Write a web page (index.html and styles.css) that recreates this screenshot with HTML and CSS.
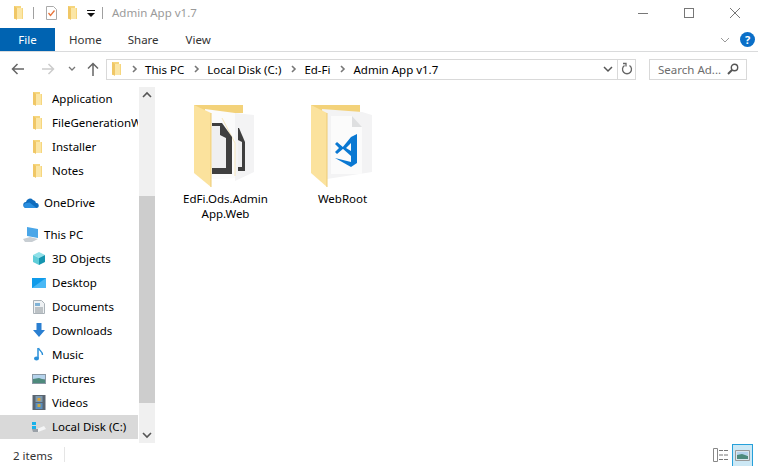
FILE: index.html
```html
<!DOCTYPE html>
<html lang="en">
<head>
  <meta charset="UTF-8">
  <title>Admin App v1.7</title>
  <link rel="stylesheet" href="styles.css">
</head>
<body>
  <svg class="defs" width="0" height="0">
    <symbol id="small-folder" viewBox="0 0 12 14">
      <path d="M1 0h7v2h2v11H1z" fill="#f6d67e"/>
      <path d="M1 0l3 2v12l-3-2z" fill="#f0c766"/>
      <path d="M4 2h5v11H4z" fill="#fbe6a6"/>
    </symbol>
    <symbol id="chev" viewBox="0 0 8 8">
      <path d="M2 1l3 3-3 3" fill="none" stroke="#777" stroke-width="1.6"/>
    </symbol>
  </svg>

  <!-- title bar -->
  <div class="titlebar">
    <svg class="qa-folder" width="12" height="14"><use href="#small-folder"/></svg>
    <span class="qa-sep"></span>
    <svg class="qa-check" width="13" height="14" viewBox="0 0 13 14">
      <path d="M1.500.5h7l3 3v10h-10z" fill="#fff" stroke="#aaa"/>
      <path d="M3.500 7l2 2.500 4-5" fill="none" stroke="#e8743b" stroke-width="1.300"/>
    </svg>
    <svg class="qa-folder2" width="12" height="14"><use href="#small-folder"/></svg>
    <svg class="qa-down" width="8" height="8" viewBox="0 0 8 8">
      <path d="M0 0h8v1H0zM0 3h8L4 7z" fill="#111"/>
    </svg>
    <span class="qa-sep"></span>
    <span class="title">Admin App v1.7</span>
    <div class="win-controls">
      <svg width="12" height="12" viewBox="0 0 12 12"><path d="M1 6.500h10" stroke="#777"/></svg>
      <svg width="12" height="12" viewBox="0 0 12 12"><rect x="1.500" y="1.500" width="9" height="9" fill="none" stroke="#777"/></svg>
      <svg width="12" height="12" viewBox="0 0 12 12"><path d="M1 1l10 10M11 1L1 11" stroke="#777"/></svg>
    </div>
  </div>

  <!-- ribbon tabs -->
  <div class="tabs">
    <div class="tab-file">File</div>
    <div class="tab tab-home">Home</div>
    <div class="tab tab-share">Share</div>
    <div class="tab tab-view">View</div>
    <svg class="ribbon-toggle" width="10" height="6" viewBox="0 0 10 6"><path d="M1 1l4 4 4-4" fill="none" stroke="#999"/></svg>
    <div class="help">?</div>
  </div>

  <!-- navigation row -->
  <div class="navbar">
    <svg class="nav-back" width="14" height="12" viewBox="0 0 14 12"><path d="M13 6H2M6.500 1L1.500 6l5 5" fill="none" stroke="#666" stroke-width="1.500"/></svg>
    <svg class="nav-forward" width="14" height="12" viewBox="0 0 14 12"><path d="M1 6h11M7.500 1l5 5-5 5" fill="none" stroke="#ccc" stroke-width="1.500"/></svg>
    <svg class="nav-recent" width="8" height="6" viewBox="0 0 8 6"><path d="M1 1l3 3 3-3" fill="none" stroke="#777" stroke-width="1.300"/></svg>
    <svg class="nav-up" width="12" height="14" viewBox="0 0 12 14"><path d="M6 14V2M1 6.500l5-5 5 5" fill="none" stroke="#666" stroke-width="1.500"/></svg>
    <div class="address">
      <svg class="addr-folder" width="12" height="14"><use href="#small-folder"/></svg>
      <svg class="crumb-chev" width="8" height="8"><use href="#chev"/></svg>
      <span class="crumb">This PC</span>
      <svg class="crumb-chev" width="8" height="8"><use href="#chev"/></svg>
      <span class="crumb">Local Disk (C:)</span>
      <svg class="crumb-chev" width="8" height="8"><use href="#chev"/></svg>
      <span class="crumb">Ed-Fi</span>
      <svg class="crumb-chev" width="8" height="8"><use href="#chev"/></svg>
      <span class="crumb">Admin App v1.7</span>
      <svg class="addr-drop" width="10" height="7" viewBox="0 0 10 7"><path d="M1 1l4 4 4-4" fill="none" stroke="#555" stroke-width="1.500"/></svg>
      <div class="addr-refresh">
        <svg width="12" height="14" viewBox="0 0 12 14"><path d="M3.500 3.500a4.500 4.500 0 1 0 5 0M2 1.500h3v3" fill="none" stroke="#666" stroke-width="1.300"/></svg>
      </div>
    </div>
    <div class="search">
      <span>Search Ad...</span>
      <svg width="12" height="12" viewBox="0 0 12 12"><circle cx="7.500" cy="4.500" r="3.200" fill="none" stroke="#555" stroke-width="1.400"/><path d="M5 7l-4 4" stroke="#555" stroke-width="2"/></svg>
    </div>
  </div>

  <div class="main">
    <!-- tree -->
    <div class="sidebar">
      <div class="row"><svg class="fold" width="12" height="14"><use href="#small-folder"/></svg><span>Application</span></div>
      <div class="row"><svg class="fold" width="12" height="14"><use href="#small-folder"/></svg><span>FileGenerationW</span></div>
      <div class="row"><svg class="fold" width="12" height="14"><use href="#small-folder"/></svg><span>Installer</span></div>
      <div class="row"><svg class="fold" width="12" height="14"><use href="#small-folder"/></svg><span>Notes</span></div>
      <div class="row top-row group-start">
        <svg width="16" height="12" viewBox="0 0 16 12"><path d="M3.500 11a3 3 0 0 1-.5-6 4 4 0 0 1 7-2 3.500 3.500 0 0 1 3 3 2.500 2.500 0 0 1 .5 5z" fill="#0f6cbd"/><path d="M3.500 11a2.500 2.500 0 0 1 0-5l3-.5 7 5.500z" fill="#2b8fe0"/></svg>
        <span>OneDrive</span>
      </div>
      <div class="row top-row group-start">
        <svg width="16" height="15" viewBox="0 0 16 15"><path d="M4 0l11 2v9L4 9z" fill="#4aa6e8"/><path d="M0 12l7-2 8 2-6 3H2z" fill="#c8ced3"/></svg>
        <span>This PC</span>
      </div>
      <div class="row"><svg width="14" height="15" viewBox="0 0 14 15"><path d="M7 1l6 3-6 3-6-3z" fill="#8fe0e8"/><path d="M1 4l6 3v7l-6-3z" fill="#5fcdd8"/><path d="M13 4L7 7v7l6-3z" fill="#1595b0"/></svg><span>3D Objects</span></div>
      <div class="row"><svg width="14" height="12" viewBox="0 0 14 12"><path d="M0 1h14v10H0z" fill="#0f9bea"/><path d="M0 11L14 1v10z" fill="#49b8f5"/></svg><span>Desktop</span></div>
      <div class="row"><svg width="12" height="14" viewBox="0 0 12 14"><path d="M.5.500h8l3 3v10H.500z" fill="#eef1f3" stroke="#aab2b8"/><path d="M2 3h5v3H2z" fill="#7fb2d6"/><path d="M2 8h8M2 10h8M2 12h8" stroke="#8b9398"/></svg><span>Documents</span></div>
      <div class="row"><svg width="14" height="15" viewBox="0 0 14 15"><path d="M4.500 0h5v7H13l-6 7-6-7h3.500z" fill="#2a7fd1"/></svg><span>Downloads</span></div>
      <div class="row"><svg width="12" height="15" viewBox="0 0 12 15"><path d="M5 1v10" stroke="#2a8fd8" stroke-width="1.500"/><path d="M5.500 1c1 3 4 3 4 7" fill="none" stroke="#2a8fd8" stroke-width="1.300"/><ellipse cx="3.500" cy="11.500" rx="2.500" ry="2" fill="#2a8fd8"/></svg><span>Music</span></div>
      <div class="row"><svg width="14" height="10" viewBox="0 0 14 10"><path d="M0 0h14v10H0z" fill="#8a98a4"/><path d="M1 1h12v4H1z" fill="#b5d3ec"/><path d="M1 5l6-1 6 2v3H1z" fill="#4e8a7c"/></svg><span>Pictures</span></div>
      <div class="row"><svg width="13" height="15" viewBox="0 0 13 15"><path d="M0 0h13v15H0z" fill="#5a6570"/><path d="M3 1h7v6H3z" fill="#7d9ab0"/><path d="M3 8h7v6H3z" fill="#5a8fc0"/><path d="M5 3h3v3H5z" fill="#d8a23c"/><path d="M5 9h3v3H5z" fill="#c9a842"/></svg><span>Videos</span></div>
      <div class="row selected"><svg width="14" height="12" viewBox="0 0 14 12"><path d="M5 8l7-3 2 3-8 3z" fill="#f4f5f6"/><path d="M0 8h6v3H1z" fill="#9aa1a8"/><path d="M0 1h4v3H0zM0 5h4v3H0z" fill="#19b2ea"/></svg><span>Local Disk (C:)</span></div>
    </div>

    <!-- tree scrollbar -->
    <div class="scrollbar">
      <svg class="scroll-btn" width="16" height="17" viewBox="0 0 16 17"><path d="M4 10l4-4 4 4" fill="none" stroke="#555" stroke-width="1.600"/></svg>
      <div class="scroll-space"></div>
      <div class="scroll-thumb"></div>
      <div class="scroll-fill"></div>
      <svg class="scroll-btn" width="16" height="17" viewBox="0 0 16 17"><path d="M4 7l4 4 4-4" fill="none" stroke="#555" stroke-width="1.600"/></svg>
    </div>

    <!-- folder contents -->
    <div class="files">
      <div class="file">
        <svg width="64" height="88" viewBox="0 0 64 88">
          <path d="M1 1h49v8H1z" fill="#f3d27a"/>
          <path d="M42 9l19 2v57l-19 9z" fill="#f3f3f4"/>
          <path d="M12 5l30 4v65l-12 1H12z" fill="#fbfbfb"/>
          <path d="M29 14l13 25v33" fill="none" stroke="#f6e7bd"/>
          <path d="M45 24h1l6 14v29h-7z" fill="#3f3f3f"/>
          <path d="M45 36l4 2v25h-4z" fill="#efeff0"/>
          <path d="M19 19h10l10 14v37H19z" fill="#3f3f3f"/>
          <path d="M19 22h8v9l6 3v30H19z" fill="#efeff0"/>
          <path d="M1 1l17 8v74L1 69z" fill="#fbe29d"/>
          <path d="M18 9v74" stroke="#eccb75"/>
        </svg>
        <div class="file-name">EdFi.Ods.Admin App.Web</div>
      </div>
      <div class="file">
        <svg width="64" height="88" viewBox="0 0 64 88">
          <path d="M1 1h49v8H1z" fill="#f3d27a"/>
          <path d="M12 5l40 3 10 3v57l-45 7z" fill="#f3f3f4"/>
          <path d="M21 12h21l10 11v47H21z" fill="#fbfbfb"/>
          <path d="M42 12l10 11h-10z" fill="#dedfe0"/>
          <path d="M41 33l6-3v29l-6 4z" fill="#0a78d2"/>
          <path d="M25 54l16 4v5z" fill="#0a78d2"/>
          <path d="M41 33L32 44l9 8v-5l-5-3 5-5z" fill="#0a78d2"/>
          <path d="M25 40l2-2 7 6-7 6-2-2 4-4z" fill="#0a78d2"/>
          <path d="M1 1l16 8v74L1 69z" fill="#fbe29d"/>
          <path d="M17 9v74" stroke="#eccb75"/>
        </svg>
        <div class="file-name">WebRoot</div>
      </div>
    </div>
  </div>

  <!-- status bar -->
  <div class="statusbar">
    <span class="count">2 items</span>
    <span class="status-sep"></span>
    <div class="view-btns">
      <svg width="16" height="14" viewBox="0 0 16 14"><path d="M.5.500h4v13h-4z" fill="#fff" stroke="#888"/><path d="M6 2.500h4M11 2.500h4M6 7h4M11 7h4M6 11.500h4M11 11.500h4" stroke="#777"/></svg>
      <div class="view-active">
        <svg width="15" height="11" viewBox="0 0 15 11"><path d="M.5.500h14v10H.500z" fill="#dbe6ee" stroke="#999"/><path d="M2 2h11v3H2z" fill="#b5d3ec"/><path d="M2 5l5-1 6 2v3H2z" fill="#4e8a7c"/></svg>
      </div>
    </div>
  </div>
</body>
</html>
```

FILE: styles.css
```css
/* Reset */
html, body { margin: 0; padding: 0; }

body {
  width: 758px;
  height: 466px;
  overflow: hidden;
  display: flex;
  flex-direction: column;
  background: #ffffff;
  color: #000000;
  font-family: 'Noto Sans', Arial, sans-serif;
  font-size: 11.5px;
}

.defs { display: block; height: 0; }

svg { flex: none; display: block; }

/* title bar */
.titlebar {
  height: 28px;
  display: flex;
  align-items: center;
  padding-left: 13px;
}

.qa-sep { width: 1px; height: 12px; background: #a0a0a0; margin: 0 7px; margin-top: -2px; }
.qa-folder { margin-right: 1px; margin-top: -3px; }
.qa-check { margin-left: 4px; margin-top: -2px; }
.qa-folder2 { margin-left: 9px; margin-top: -3px; }
.qa-down { margin-left: 8px; margin-top: -1px; }
.title { color: #9a9a9a; margin-top: -3px; margin-left: 2px; }

.win-controls {
  margin-left: auto;
  margin-right: 17px;
  margin-top: -3px;
  display: flex;
  gap: 34px;
}

/* ribbon tabs */
.tabs {
  height: 23px;
  display: flex;
  align-items: center;
  border-bottom: 1px solid #dadbdc;
}

.tab-file {
  width: 55px;
  height: 23px;
  line-height: 23px;
  background: #0063b1;
  color: #ffffff;
  text-align: center;
}

.tab { color: #333333; }
.tab-home { margin-left: 14px; }
.tab-share { margin-left: 26px; }
.tab-view { margin-left: 27px; }

.ribbon-toggle { margin-left: auto; margin-right: 10px; }

.help {
  width: 15px;
  height: 15px;
  border-radius: 50%;
  margin-right: 3px;
  background: #0a6fc8;
  color: #ffffff;
  font-weight: bold;
  font-size: 11px;
  line-height: 15px;
  text-align: center;
}

/* navigation row */
.navbar {
  height: 34px;
  display: flex;
  align-items: center;
}

.nav-back { margin-left: 11px; }
.nav-forward { margin-left: 16px; }
.nav-recent { margin-left: 13px; }
.nav-up { margin-left: 11px; margin-top: -1px; }

.address {
  width: 530px;
  height: 21px;
  margin-left: 7px;
  box-sizing: border-box;
  border: 1px solid #d9d9d9;
  display: flex;
  align-items: center;
}

.addr-folder { margin-left: 4px; margin-right: -1px; }
.crumb-chev { margin-left: 9px; margin-right: 6px; width: 8px; }
.crumb { white-space: nowrap; }
.addr-drop { margin-left: auto; margin-right: 2px; }

.addr-refresh {
  width: 17px;
  height: 19px;
  margin-left: 2px;
  border-left: 1px solid #d9d9d9;
  display: flex;
  align-items: center;
  justify-content: center;
}

.search {
  width: 98px;
  height: 21px;
  margin-left: 13px;
  box-sizing: border-box;
  border: 1px solid #d9d9d9;
  padding: 0 7px 0 8px;
  display: flex;
  align-items: center;
  justify-content: space-between;
  color: #6d6d6d;
}

/* main area */
.main {
  flex: 1;
  min-height: 0;
  display: flex;
  padding-top: 1px;
}

.sidebar {
  width: 138px;
  flex: none;
  overflow: hidden;
}

.row {
  height: 24px;
  box-sizing: border-box;
  padding-bottom: 1px;
  display: flex;
  align-items: center;
  white-space: nowrap;
  padding-left: 32px;
}

.row svg { width: 14px; margin-right: 6px; }
.row svg.fold { width: 12px; margin-right: 8px; }

.row.group-start { margin-top: 8px; }

.row.top-row { padding-left: 23px; }
.row.top-row svg { width: 16px; margin-right: 5px; }

.selected { background: #d9d9d9; }

.scrollbar {
  width: 16px;
  flex: none;
  margin-left: 1px;
  background: #f0f0f0;
  display: flex;
  flex-direction: column;
}

.scroll-space { height: 92px; }
.scroll-thumb { height: 207px; background: #cdcdcd; }
.scroll-fill { flex: 1; }

/* folder contents */
.files {
  flex: 1;
  display: flex;
  align-items: flex-start;
  padding: 17px 0 0 12px;
}

.file {
  width: 117px;
  display: flex;
  flex-direction: column;
  align-items: center;
}

.file svg { margin-right: 1px; margin-bottom: -1px; }

.file-name {
  width: 90px;
  text-align: center;
  line-height: 15px;
}

/* status bar */
.statusbar {
  height: 23px;
  display: flex;
  align-items: center;
  padding-left: 13px;
  color: #333333;
}

.count { margin-top: 1px; }

.status-sep { width: 1px; height: 15px; background: #e5e5e5; margin-left: 12px; }

.view-btns {
  margin-left: auto;
  margin-right: 5px;
  display: flex;
  align-items: center;
  gap: 3px;
}

.view-active {
  width: 21px;
  height: 22px;
  box-sizing: border-box;
  border: 1px solid #26a0da;
  border-bottom: none;
  background: #cce8f5;
  display: flex;
  align-items: center;
  justify-content: center;
}
```
